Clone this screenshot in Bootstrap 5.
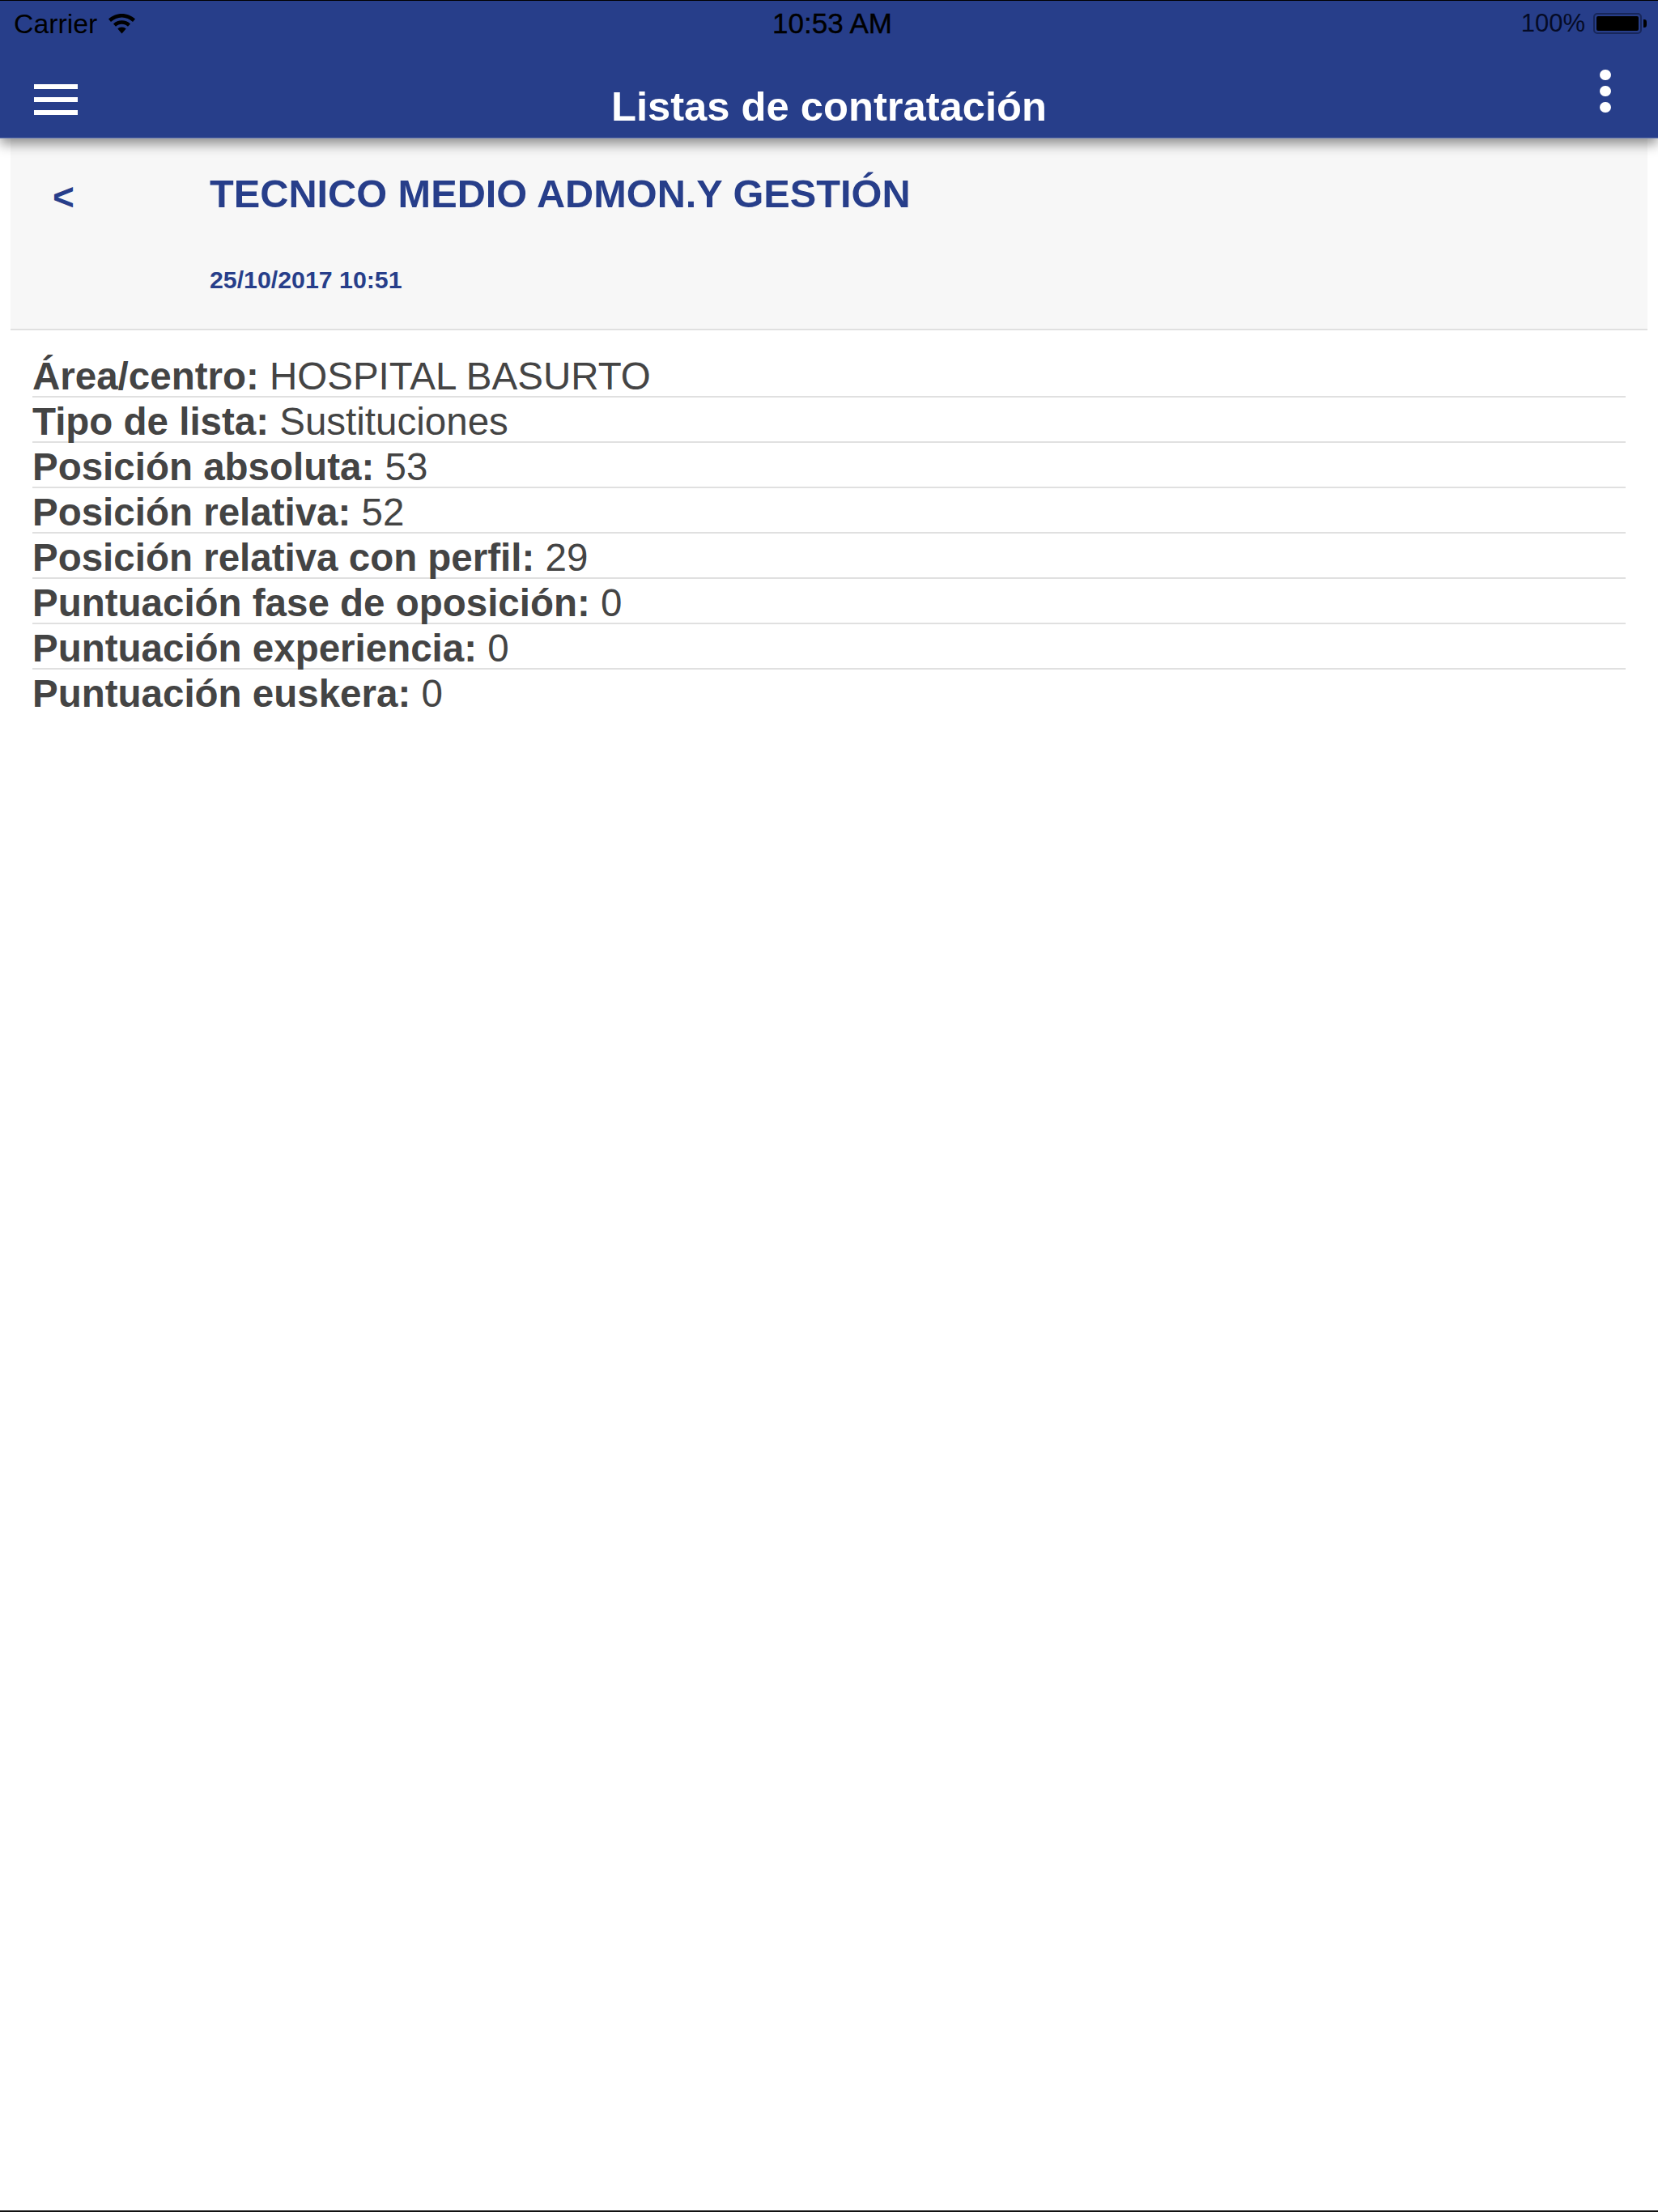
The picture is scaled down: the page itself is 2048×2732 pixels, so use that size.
<!DOCTYPE html>
<html lang="es">
<head>
<meta charset="utf-8">
<title>Listas de contratación</title>
<link rel="stylesheet" href="https://cdn.jsdelivr.net/npm/bootstrap@5.3.0/dist/css/bootstrap.min.css">
<style>
html, body { height: 100%; }
body { font-family: "Liberation Sans", Arial, sans-serif; background: #fff; color: #444; }
.screen-frame { min-height: 100vh; border-top: 1px solid #000; border-bottom: 2px solid #111; }
.app-bar { background: #273e8a; height: 170px; border-bottom: 1px solid #6c7db0; box-shadow: 0 7px 14px rgba(0,0,0,.42); position: relative; z-index: 2; }
.status-row { height: 54px; padding: 6px 14px 0 17px; color: #000; font-size: 33.8px; line-height: 44px; }
.status-side { flex: 1 1 0; }
.status-time { font-size: 35px; margin-left: 5px; -webkit-text-stroke: .4px #000; }
.status-wifi { width: 33px; height: 25px; margin-left: 14px; }
.status-pct { color: #050b26; margin-right: 10px; font-size: 31px; }
.battery-shell { width: 60px; height: 26px; border: 2px solid #17265a; border-radius: 5px; padding: 2px; margin-right: 6px; position: relative; }
.battery-fill { display: block; width: 100%; height: 100%; background: #000; border-radius: 2px; }
.battery-shell::after { content: ""; position: absolute; right: -8px; top: 6px; width: 4px; height: 10px; background: #000; border-radius: 0 3px 3px 0; }
.title-row { height: 115px; padding: 0 42px; }
.menu-btn { width: 54px; height: 38px; padding: 0; border: 0; background: none; margin-top: 20px; }
.menu-btn span { display: block; height: 6px; background: #fff; }
.app-title { color: #fff; font-size: 50.7px; font-weight: 700; line-height: 1; margin: 0; padding-top: 39px; }
.kebab-btn { width: 14px; padding: 0; border: 0; background: none; gap: 6.5px; margin-right: 16px; }
.kebab-btn span { width: 13.5px; height: 13.5px; background: #fff; border-radius: 50%; }
.side-slot { flex: 1 1 0; }
.detail-head { margin: 0 13px; height: 237px; background: #f7f7f7; border-bottom: 2px solid #e0e0e0; color: #273e8a; }
.back-col { width: 246px; padding: 43px 0 0 52px; font-size: 46px; font-weight: 700; line-height: 58px; }
.head-title { font-size: 48.7px; font-weight: 700; line-height: 56px; margin: 0; padding-top: 40px; }
.head-date { font-size: 30.3px; font-weight: 700; line-height: 36px; margin: 0; padding-top: 61px; }
.field-list { padding: 27px 40px 0; }
.field-list .field-row { background: transparent; color: #444; border: 0; border-bottom: 2px solid #e0e0e0; padding: 5px 0 0; font-size: 47.5px; line-height: 49px; border-radius: 0; }
.field-list .field-row:last-child { border-bottom: 0; }
.field-row b { font-weight: 700; }
</style>
</head>
<body>
<div class="screen-frame">
  <header class="app-bar">
    <div class="status-row d-flex align-items-start">
      <div class="status-side d-flex align-items-center">
        <span>Carrier</span>
        <svg class="status-wifi" viewBox="0 0 33 25"><path d="M16.5 0C10 0 4.6 2.5 0 6.5l3 3.4C6.9 6.5 11.4 4.4 16.5 4.4s9.6 2.1 13.5 5.5l3-3.4C28.4 2.500 23 0 16.500 0z"/><path d="M16.500 8.300c-4.100 0-7.500 1.500-10.500 4.100l3 3.400c2.100-1.800 4.500-3 7.500-3s5.400 1.200 7.500 3l3-3.400c-3-2.600-6.400-4.100-10.500-4.100z"/><path d="M16.500 16.600c-2.200 0-3.900.8-5.200 1.900l5.200 6.100 5.200-6.100c-1.300-1.100-3-1.900-5.200-1.900z"/></svg>
      </div>
      <div class="status-time">10:53 AM</div>
      <div class="status-side d-flex align-items-center justify-content-end">
        <span class="status-pct">100%</span>
        <span class="battery-shell"><span class="battery-fill"></span></span>
      </div>
    </div>
    <nav class="title-row d-flex align-items-center">
      <div class="side-slot d-flex">
        <button class="menu-btn d-flex flex-column justify-content-between" type="button" aria-label="Menú"><span class="w-100"></span><span class="w-100"></span><span class="w-100"></span></button>
      </div>
      <h1 class="app-title">Listas de contratación</h1>
      <div class="side-slot d-flex justify-content-end">
        <button class="kebab-btn d-flex flex-column align-items-center" type="button" aria-label="Más"><span></span><span></span><span></span></button>
      </div>
    </nav>
  </header>
  <section class="detail-head d-flex">
    <div class="back-col">&lt;</div>
    <div>
      <h2 class="head-title">TECNICO MEDIO ADMON.Y GESTIÓN</h2>
      <p class="head-date">25/10/2017 10:51</p>
    </div>
  </section>
  <ul class="field-list list-group list-group-flush">
    <li class="field-row list-group-item"><b>Área/centro:</b> HOSPITAL BASURTO</li>
    <li class="field-row list-group-item"><b>Tipo de lista:</b> Sustituciones</li>
    <li class="field-row list-group-item"><b>Posición absoluta:</b> 53</li>
    <li class="field-row list-group-item"><b>Posición relativa:</b> 52</li>
    <li class="field-row list-group-item"><b>Posición relativa con perfil:</b> 29</li>
    <li class="field-row list-group-item"><b>Puntuación fase de oposición:</b> 0</li>
    <li class="field-row list-group-item"><b>Puntuación experiencia:</b> 0</li>
    <li class="field-row list-group-item"><b>Puntuación euskera:</b> 0</li>
  </ul>
</div>
<script src="https://cdn.jsdelivr.net/npm/bootstrap@5.3.0/dist/js/bootstrap.bundle.min.js"></script>
</body>
</html>
